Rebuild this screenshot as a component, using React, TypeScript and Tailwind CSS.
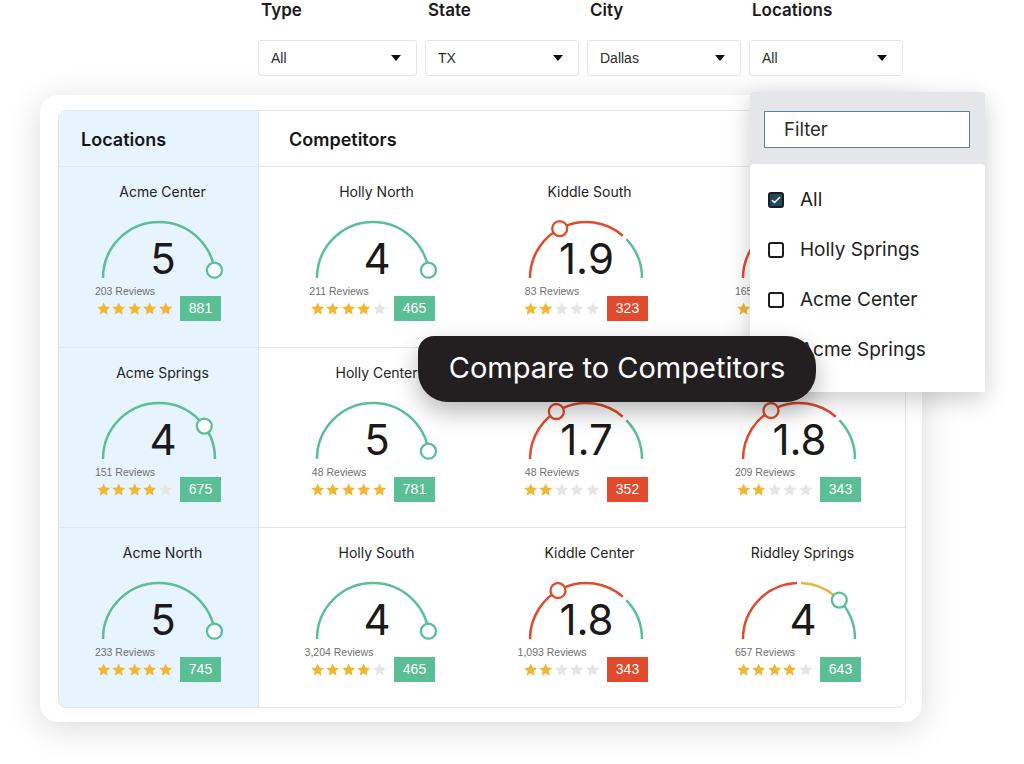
import React from 'react'

type Seg = { from: number; to: number; color: string }

const GREEN = '#5bbf96'
const RED = '#df4b2c'
const YELLOW = '#e6b43f'

const ALL_GREEN: Seg[] = [{ from: 180, to: 0, color: GREEN }]
const LOW: Seg[] = [
  { from: 180, to: 49, color: RED },
  { from: 44, to: 0, color: GREEN },
]
const MIXED: Seg[] = [
  { from: 180, to: 92, color: RED },
  { from: 88, to: 50, color: YELLOW },
  { from: 47, to: 0, color: GREEN },
]

type Cell = {
  name: string
  score: string
  reviews: string
  stars: number
  count: number
  bad?: boolean
  segs: Seg[]
  knob: number
  knobColor: string
}

const ROWS: { loc: Cell; comps: Cell[] }[] = [
  {
    loc: { name: 'Acme Center', score: '5', reviews: '203 Reviews', stars: 5, count: 881, segs: ALL_GREEN, knob: 8, knobColor: GREEN },
    comps: [
      { name: 'Holly North', score: '4', reviews: '211 Reviews', stars: 4, count: 465, segs: ALL_GREEN, knob: 8, knobColor: GREEN },
      { name: 'Kiddle South', score: '1.9', reviews: '83 Reviews', stars: 2, count: 323, bad: true, segs: LOW, knob: 118, knobColor: RED },
      { name: 'Kiddle North', score: '1.6', reviews: '165 Reviews', stars: 2, count: 312, bad: true, segs: LOW, knob: 124, knobColor: RED },
    ],
  },
  {
    loc: { name: 'Acme Springs', score: '4', reviews: '151 Reviews', stars: 4, count: 675, segs: ALL_GREEN, knob: 36, knobColor: GREEN },
    comps: [
      { name: 'Holly Center', score: '5', reviews: '48 Reviews', stars: 5, count: 781, segs: ALL_GREEN, knob: 8, knobColor: GREEN },
      { name: 'Kiddle Springs', score: '1.7', reviews: '48 Reviews', stars: 2, count: 352, bad: true, segs: LOW, knob: 122, knobColor: RED },
      { name: 'Riddley North', score: '1.8', reviews: '209 Reviews', stars: 2, count: 343, segs: LOW, knob: 120, knobColor: RED },
    ],
  },
  {
    loc: { name: 'Acme North', score: '5', reviews: '233 Reviews', stars: 5, count: 745, segs: ALL_GREEN, knob: 8, knobColor: GREEN },
    comps: [
      { name: 'Holly South', score: '4', reviews: '3,204 Reviews', stars: 4, count: 465, segs: ALL_GREEN, knob: 8, knobColor: GREEN },
      { name: 'Kiddle Center', score: '1.8', reviews: '1,093 Reviews', stars: 2, count: 343, bad: true, segs: LOW, knob: 120, knobColor: RED },
      { name: 'Riddley Springs', score: '4', reviews: '657 Reviews', stars: 4, count: 643, segs: MIXED, knob: 44, knobColor: GREEN },
    ],
  },
]

const FILTERS = [
  { label: 'Type', value: 'All', w: 'w-[159px]' },
  { label: 'State', value: 'TX', w: 'w-[154px]' },
  { label: 'City', value: 'Dallas', w: 'w-[154px]' },
  { label: 'Locations', value: 'All', w: 'w-[154px]' },
]

const STAR = 'M12 2.2l2.95 6.55 7.1.7-5.35 4.8 1.55 7-6.25-3.65-6.25 3.65 1.55-7L1.95 9.45l7.1-.7z'

function Gauge({ segs, knob, knobColor }: { segs: Seg[]; knob: number; knobColor: string }) {
  const cx = 70
  const cy = 61
  const r = 56
  const p = (a: number) => [cx + r * Math.cos((a * Math.PI) / 180), cy - r * Math.sin((a * Math.PI) / 180)]
  const [kx, ky] = p(knob)
  return (
    <svg width="140" height="66" viewBox="0 0 140 66" className="absolute inset-0">
      {segs.map((s, i) => {
        const [x1, y1] = p(s.from)
        const [x2, y2] = p(s.to)
        return (
          <path key={i} d={`M${x1} ${y1}A${r} ${r} 0 0 1 ${x2} ${y2}`} fill="none" stroke={s.color} strokeWidth="2.5" />
        )
      })}
      <circle cx={kx} cy={ky} r="7.5" fill="white" stroke={knobColor} strokeWidth="2.3" />
    </svg>
  )
}

function Stars({ n }: { n: number }) {
  return (
    <div className="flex w-[77px]">
      {[0, 1, 2, 3, 4].map(i => (
        <svg key={i} width="15.4" height="15.4" viewBox="0 0 24 24">
          <path d={STAR} fill={i < n ? '#f1b632' : '#e5e5e5'} />
        </svg>
      ))}
    </div>
  )
}

function Rating({ c }: { c: Cell }) {
  return (
    <div className="flex flex-col items-center pt-[17px]">
      <div className="pl-2 text-[14px] leading-[16px] text-[#222] whitespace-nowrap">{c.name}</div>
      <div className="relative mt-[17px] w-[140px] h-[66px]">
        <Gauge segs={c.segs} knob={c.knob} knobColor={c.knobColor} />
        <div
          className={`absolute inset-x-0 top-[21px] text-center text-[42px] leading-[42px] text-[#1a1a1a] ${c.score.length === 1 ? 'pl-[9px]' : 'pl-[2px]'}`}
        >
          {c.score}
        </div>
      </div>
      <div className="mt-[2px] flex w-[125px] flex-col font-['Liberation_Sans',Arial,sans-serif]">
        <div className="flex w-[58px] justify-center whitespace-nowrap text-[10.5px] leading-[12px] text-[#6f6f6f]">
          {c.reviews}
        </div>
        <div className="-mt-px flex items-center gap-[7px]">
          <Stars n={c.stars} />
          <div
            className={`flex h-[25px] w-[41px] items-center justify-center text-[14px] text-white ${c.bad ? 'bg-[#df4b2c]' : 'bg-[#5bbf96]'}`}
          >
            {c.count}
          </div>
        </div>
      </div>
    </div>
  )
}

function Filters() {
  return (
    <div className="flex gap-2 pl-[258px]">
      {FILTERS.map(f => (
        <div key={f.label} className={`flex flex-col ${f.w}`}>
          <div className="pl-[3px] text-[17px] font-semibold leading-[20px] text-[#1b1b1b]">{f.label}</div>
          <div className="mt-[20px] flex h-[36px] items-center justify-between rounded-[3px] border border-[#e3e6ea] bg-white pl-3 pr-[15px] font-['Liberation_Sans',Arial,sans-serif] text-[14px] text-[#2b2b2b]">
            <span>{f.value}</span>
            <svg width="10" height="6" viewBox="0 0 10 6">
              <path d="M0 0h10L5 6z" fill="#111" />
            </svg>
          </div>
        </div>
      ))}
    </div>
  )
}

function Board() {
  return (
    <div className="ml-[40px] mt-[19px] h-[627px] w-[882px] rounded-[18px] bg-white pl-[18px] pt-[15px] shadow-[0_6px_34px_rgba(0,0,0,0.15)]">
      <div className="h-[598px] w-[848px] overflow-hidden rounded-[8px] border border-[#e3e6e9]">
        <div className="flex h-[55px]">
          <div className="flex w-[200px] items-center border-r border-[#e3e6e9] bg-[#e8f4fd] pl-[22px] pt-[2px] text-[18px] font-semibold text-[#161616]">
            Locations
          </div>
          <div className="flex flex-1 items-center pl-[30px] pt-[2px] text-[18px] font-semibold text-[#161616]">
            Competitors
          </div>
        </div>
        {ROWS.map((row, i) => (
          <div key={i} className={`flex border-t border-[#e3e6e9] ${i === 0 ? 'h-[181px]' : 'h-[180px]'}`}>
            <div className="w-[200px] border-r border-[#e3e6e9] bg-[#e8f4fd]">
              <Rating c={row.loc} />
            </div>
            <div className="flex flex-1 pl-[7px]">
              {row.comps.map(c => (
                <div key={c.name} className="w-[213px]">
                  <Rating c={c} />
                </div>
              ))}
            </div>
          </div>
        ))}
      </div>
    </div>
  )
}

function LocationsMenu() {
  const items = [
    { label: 'All', on: true },
    { label: 'Holly Springs', on: false },
    { label: 'Acme Center', on: false },
    { label: 'Acme Springs', on: false },
  ]
  return (
    <div className="absolute left-[750px] top-[92px] flex h-[300px] w-[235px] flex-col rounded-[4px] bg-[#e4e6ea] shadow-[0_8px_24px_rgba(0,0,0,0.2)]">
      <div className="h-[72px] px-[14px] pt-[19px]">
        <div className="flex h-[37px] w-[206px] items-center border-[1.5px] border-[#5c8693] bg-white pl-[19px] text-[18.5px] text-[#2a2a2a]">
          Filter
        </div>
      </div>
      <div className="flex-1 rounded-t-[4px] bg-white pt-[11px]">
        {items.map(it => (
          <div key={it.label} className="flex h-[50px] items-center gap-4 pl-[18px] text-[19px] text-[#222]">
            {it.on ? (
              <div className="flex h-4 w-4 items-center justify-center rounded-[3px] border-2 border-[#1d1d1d] bg-[#1f4b5b]">
                <svg width="10" height="8" viewBox="0 0 10 8">
                  <path d="M1 4.2l2.6 2.4L9 1" fill="none" stroke="white" strokeWidth="1.4" />
                </svg>
              </div>
            ) : (
              <div className="h-4 w-4 rounded-[3px] border-2 border-[#1d1d1d] bg-white" />
            )}
            <span>{it.label}</span>
          </div>
        ))}
      </div>
    </div>
  )
}

export default function App() {
  return (
    <div className="relative h-[764px] w-[1024px] overflow-hidden bg-white font-['Inter','Noto_Sans',sans-serif]">
      <Filters />
      <Board />
      <LocationsMenu />
      <div className="absolute left-[418px] top-[336px] flex h-[66px] w-[398px] items-center justify-center rounded-[30px] rounded-tl-[16px] bg-[#231f20] pb-[2px] text-[29px] text-white shadow-[0_10px_24px_rgba(0,0,0,0.28)]">
        Compare to Competitors
      </div>
    </div>
  )
}
